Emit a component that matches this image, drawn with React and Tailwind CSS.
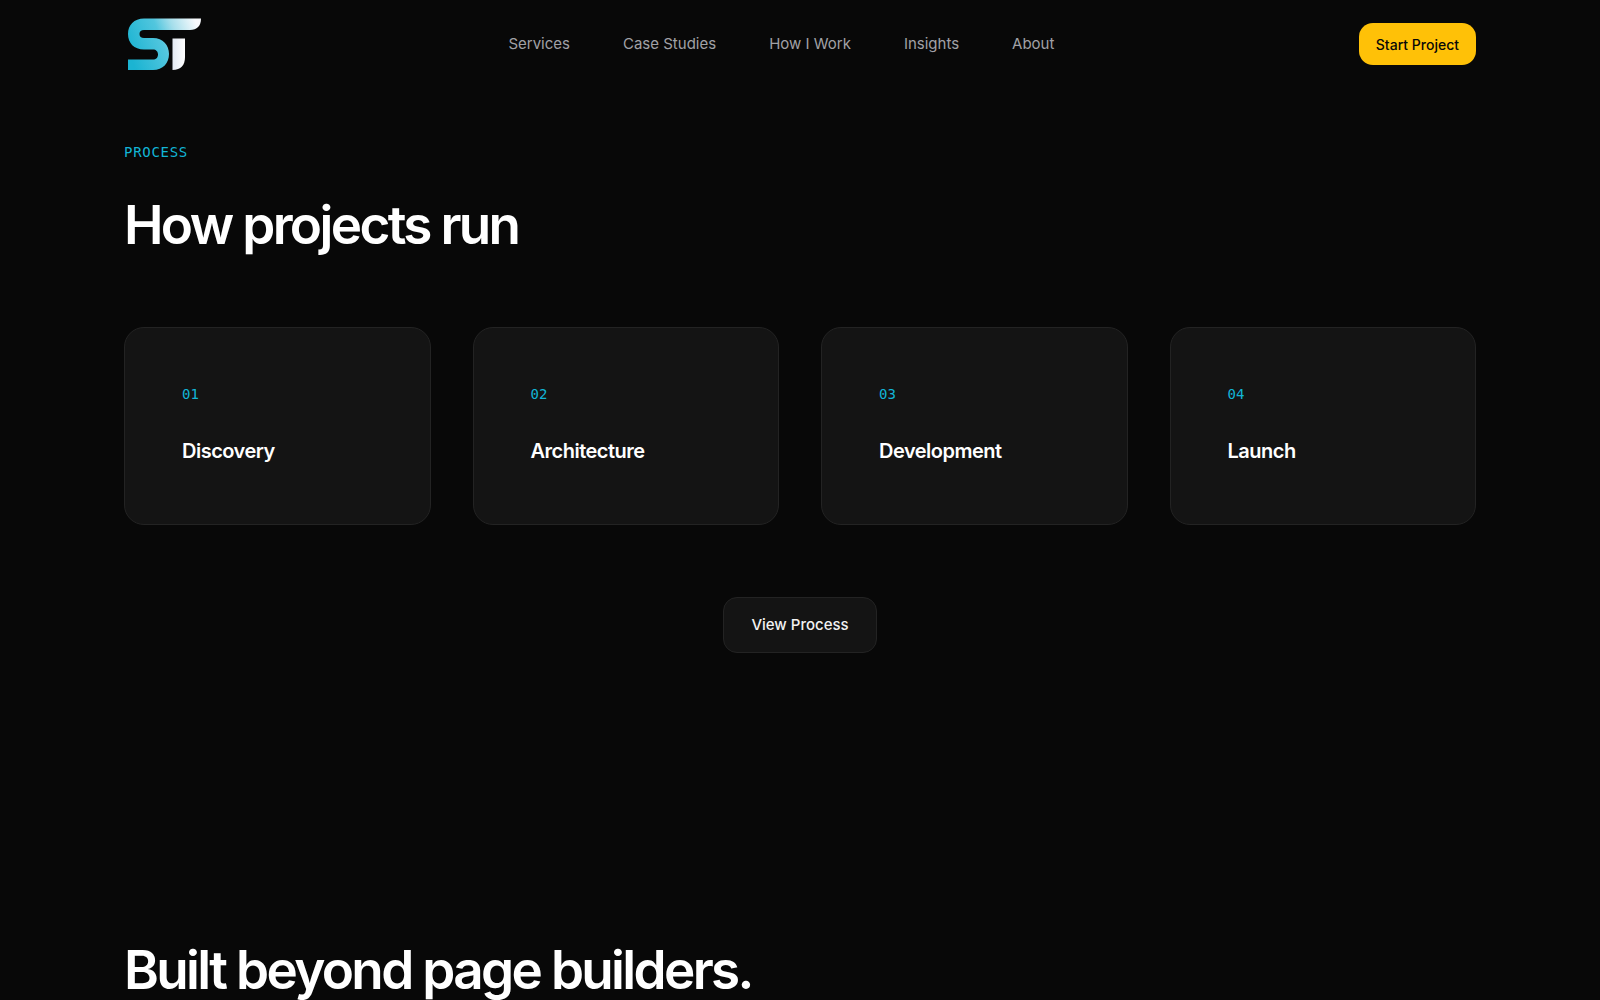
const navItems = ["Services", "Case Studies", "How I Work", "Insights", "About"];

const steps = [
  ["01", "Discovery"],
  ["02", "Architecture"],
  ["03", "Development"],
  ["04", "Launch"],
];

function Logo() {
  return (
    <svg viewBox="0 0 80 60" className="h-[60px] w-20" aria-hidden="true">
      <defs>
        <linearGradient id="logo-s" x1="4" y1="36" x2="76" y2="8" gradientUnits="userSpaceOnUse">
          <stop offset="0" stopColor="#1bb4d2" />
          <stop offset="0.45" stopColor="#52c6de" />
          <stop offset="0.65" stopColor="#a5deeb" />
          <stop offset="0.95" stopColor="#f8fafd" />
        </linearGradient>
        <linearGradient id="logo-t" x1="48" y1="0" x2="61" y2="0" gradientUnits="userSpaceOnUse">
          <stop offset="0" stopColor="#e2e8f2" />
          <stop offset="1" stopColor="#ffffff" />
        </linearGradient>
      </defs>
      <path
        d="M77 4.500H20C10 4.500 4 11 4 20C4 29 10 35.500 20 35.500H29C32 35.500 34 37.500 34 40.500C34 43.500 32 45.500 29 45.500H4V56H29C39 56 45 49 45 40C45 31 39 24 29 24H20C17 24 15.500 22.500 15.500 20C15.500 17.500 17 16 20 16H66C73 16 77 12 77 4.500Z"
        fill="url(#logo-s)"
      />
      <path d="M48.500 24.500H61V43C61 51 57 56 48.500 56Z" fill="url(#logo-t)" />
    </svg>
  );
}

function Header() {
  return (
    <header className="mx-auto flex h-[88px] max-w-[1400px] items-center justify-between px-6">
      <a href="#home" aria-label="Home">
        <Logo />
      </a>
      <nav className="flex gap-[53px] text-[15px] leading-6 text-[#a1a1a6]">
        {navItems.map((item) => (
          <a href="#top" key={item}>
            {item}
          </a>
        ))}
      </nav>
      <button className="h-[42px] rounded-[14px] bg-[#ffc107] px-[17px] text-[14px] font-medium text-[#080808]">
        Start Project
      </button>
    </header>
  );
}

function StepCard({ number, title }) {
  return (
    <article className="rounded-[20px] border border-[#232323] bg-[#141414] px-[57px] py-14">
      <div className="mb-[30px] font-['DejaVu_Sans_Mono',monospace] text-[14px] leading-5 text-[#12b5d6]">
        {number}
      </div>
      <h3 className="text-[20px] leading-[34px] font-semibold tracking-tight">
        {title}
      </h3>
    </article>
  );
}

export default function App() {
  return (
    <div className="h-screen overflow-hidden bg-[#080808] font-['Inter',sans-serif] text-white">
      <Header />

      <main className="mx-auto max-w-[1400px] px-6">
        <section className="pt-[54px]">
          <div className="mb-8 font-['DejaVu_Sans_Mono',monospace] text-[14px] leading-5 tracking-wider text-[#12b5d6]">
            PROCESS
          </div>
          <h2 className="mb-[71px] text-[53px] leading-[62px] font-semibold tracking-tighter">
            How projects run
          </h2>

          <div className="grid grid-cols-4 gap-[42px]">
            {steps.map(([number, title]) => (
              <StepCard key={number} number={number} title={title} />
            ))}
          </div>

          <div className="mt-[72px] flex justify-center">
            <button className="h-14 rounded-[14px] border border-[#232323] bg-[#141414] px-[27px] text-[15px] font-medium text-[#f2f2f2]">
              View Process
            </button>
          </div>
        </section>

        <section className="pt-[286px]">
          <h2 className="text-[53px] leading-[62px] font-semibold tracking-tighter">
            Built beyond page builders.
          </h2>
        </section>
      </main>
    </div>
  );
}
